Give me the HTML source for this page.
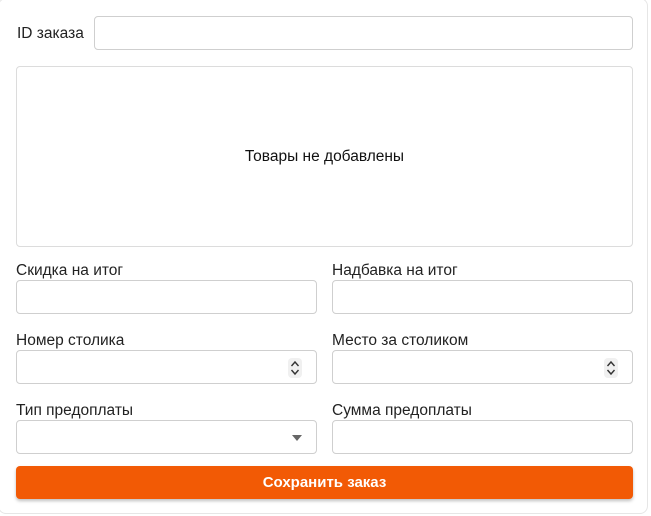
<!DOCTYPE html>
<html><head><meta charset="utf-8"><style>
*{box-sizing:border-box;margin:0;padding:0}
body{width:651px;height:516px;background:#fff;font-family:"Liberation Sans",sans-serif;color:#212121;position:relative;overflow:hidden}
.card{position:absolute;left:-2px;top:-2px;width:650px;height:516px;border:1px solid #e6e6e6;border-radius:8px;background:#fff}
.abs{position:absolute}
.inp{position:absolute;border:1px solid #cfcfcf;border-radius:4px;background:#fff}
.lbl{position:absolute;font-size:15.5px;color:#222}
.spin{position:absolute;right:14px;top:7px;width:14px;height:20px;background:#f0f0f0;border-radius:4px}
</style></head><body>
<div class="card"></div>
<div class="lbl" style="left:17px;top:25px;font-size:15.5px">ID заказа</div>
<div class="inp" style="left:94px;top:16px;width:539px;height:34px"></div>
<div class="inp" style="left:16px;top:66px;width:617px;height:181px;border-color:#dcdcdc"></div>
<div class="abs" style="left:16px;width:617px;top:148px;text-align:center;font-size:15.5px;color:#111">Товары не добавлены</div>

<div class="lbl" style="left:16px;top:262px">Скидка на итог</div>
<div class="lbl" style="left:332px;top:262px">Надбавка на итог</div>
<div class="inp" style="left:16px;top:280px;width:301px;height:34px"></div>
<div class="inp" style="left:332px;top:280px;width:301px;height:34px"></div>

<div class="lbl" style="left:16px;top:332px">Номер столика</div>
<div class="lbl" style="left:332px;top:332px">Место за столиком</div>
<div class="inp" style="left:16px;top:350px;width:301px;height:34px"><div class="spin"><svg width="14" height="20" viewBox="0 0 14 20"><path d="M3.5 8l3.5-4 3.5 4M3.5 12l3.5 4 3.5-4" fill="none" stroke="#333" stroke-width="1.4"/></svg></div></div>
<div class="inp" style="left:332px;top:350px;width:301px;height:34px"><div class="spin"><svg width="14" height="20" viewBox="0 0 14 20"><path d="M3.5 8l3.5-4 3.5 4M3.5 12l3.5 4 3.5-4" fill="none" stroke="#333" stroke-width="1.4"/></svg></div></div>

<div class="lbl" style="left:16px;top:402px">Тип предоплаты</div>
<div class="lbl" style="left:332px;top:402px">Сумма предоплаты</div>
<div class="inp" style="left:16px;top:420px;width:301px;height:34px"><svg class="abs" style="left:275px;top:14px" width="10" height="6"><path d="M0 0h10L5 6z" fill="#666"/></svg></div>
<div class="inp" style="left:332px;top:420px;width:301px;height:34px"></div>

<div class="abs" style="left:16px;top:466px;width:617px;height:33px;background:#f25a05;border-radius:4px;box-shadow:0 2px 3px rgba(0,0,0,.25);color:#fff;font-weight:bold;font-size:15px;text-align:center;line-height:34px">Сохранить заказ</div>
</body></html>
